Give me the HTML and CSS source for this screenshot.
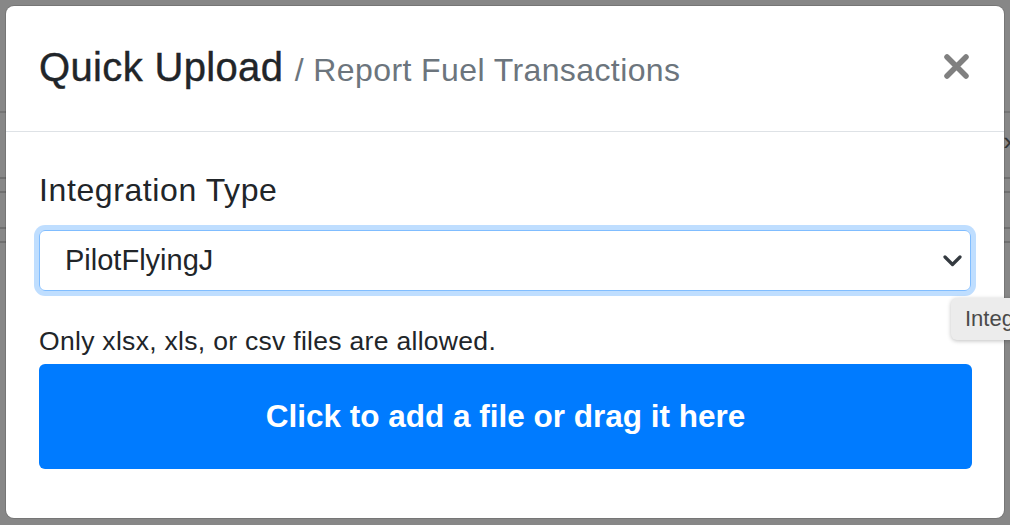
FILE: index.html
```html
<!DOCTYPE html>
<html lang="en">
<head>
  <meta charset="UTF-8">
  <title>Quick Upload</title>
  <link rel="stylesheet" href="styles.css">
</head>
<body>

  <!-- Page behind the backdrop -->
  <div class="page">
    <div class="row row-head"></div>
    <div class="row row-arrow"><span class="row-chevron">&#8250;</span></div>
    <div class="row row-a"></div>
    <div class="row row-b"></div>
    <div class="row row-c"></div>
    <div class="row row-d"></div>
  </div>

  <!-- Modal -->
  <div class="modal">
    <div class="modal-header">
      <h5 class="modal-title">Quick Upload <small>/ Report Fuel Transactions</small></h5>
      <button class="close" aria-label="Close">
        <svg width="27" height="27" viewBox="0 0 27 27">
          <path d="M4 4 L23 23 M23 4 L4 23" stroke="#808080" stroke-width="5.5" stroke-linecap="round"/>
        </svg>
      </button>
    </div>
    <div class="modal-body">
      <label class="form-label">Integration Type</label>
      <div class="select">
        <span>PilotFlyingJ</span>
        <svg class="select-arrow" width="19" height="12" viewBox="0 0 19 12">
          <path d="M2 2 L9.5 9.5 L17 2" fill="none" stroke="#343a40" stroke-width="3.2" stroke-linecap="round" stroke-linejoin="round"/>
        </svg>
      </div>
      <p class="help">Only xlsx, xls, or csv files are allowed.</p>
      <div class="dropzone">Click to add a file or drag it here</div>
    </div>
  </div>

  <!-- Native tooltip -->
  <div class="tooltip">Integration Type</div>

</body>
</html>
```

FILE: styles.css
```css
* {
  margin: 0;
  padding: 0;
  box-sizing: border-box;
}
body {
  width: 1010px;
  height: 525px;
  overflow: hidden;
  background-color: #878787;
  font-family: "Liberation Sans", Arial, sans-serif;
  color: #212529;
  position: relative;
}
.page {
  padding-top: 111px;
}
.row {
  border-top: 2px solid #6f6f6f;
}
.row-head {
  height: 20px;
  border-top-color: #747474;
}
.row-arrow {
  height: 46px;
  border-top: none;
  display: flex;
  justify-content: flex-end;
}
.row-chevron {
  font-size: 26px;
  line-height: 20px;
  color: #333;
  margin-right: -2px;
}
.row-a {
  height: 14px;
}
.row-b {
  height: 36px;
}
.row-c {
  height: 14px;
}
.row-d {
  height: 10px;
}
.modal {
  position: absolute;
  top: 6px;
  left: 6px;
  width: 998px;
  height: 512px;
  background-color: white;
  border-radius: 8px;
  box-shadow: 0 0 0 1px rgba(0, 0, 0, 0.12);
}
.modal-header {
  height: 126px;
  padding: 0 34px 0 33px;
  display: flex;
  align-items: center;
  border-bottom: 1px solid #dee2e6;
}
.modal-title {
  font-size: 40px;
  font-weight: normal;
  line-height: 48px;
  color: #212529;
  letter-spacing: 0.35px;
  -webkit-text-stroke: 0.4px #212529;
}
.modal-title small {
  font-size: 32px;
  color: #6c757d;
  letter-spacing: 0.4px;
  -webkit-text-stroke: 0;
}
.close {
  margin-left: auto;
  align-self: flex-start;
  margin-top: 47px;
  background: none;
  border: none;
  display: flex;
}
.modal-body {
  padding: 38px 33px 0 33px;
}
.form-label {
  display: block;
  font-size: 32px;
  line-height: 40px;
  letter-spacing: 0.6px;
  margin-bottom: 20px;
}
.select {
  width: 932px;
  height: 61px;
  border: 1px solid #80bdff;
  border-radius: 6px;
  box-shadow: 0 0 0 5px rgba(0, 123, 255, 0.25);
  display: flex;
  align-items: center;
  padding: 0 8px 0 25px;
  font-size: 29px;
  color: #212529;
}
.select-arrow {
  margin-left: auto;
}
.help {
  font-size: 26.5px;
  line-height: 32px;
  letter-spacing: 0.3px;
  margin-top: 34px;
}
.dropzone {
  margin-top: 7px;
  width: 933px;
  height: 105px;
  background-color: #007bff;
  border-radius: 6px;
  color: white;
  font-weight: bold;
  font-size: 31.5px;
  display: flex;
  align-items: center;
  justify-content: center;
}
.tooltip {
  position: absolute;
  left: 951px;
  top: 298px;
  width: 180px;
  height: 42px;
  background-color: #ececec;
  border-radius: 6px;
  box-shadow: 0 1px 4px rgba(0, 0, 0, 0.25);
  font-size: 22px;
  line-height: 42px;
  color: #4a4a4a;
  padding-left: 14px;
  white-space: nowrap;
}
```
